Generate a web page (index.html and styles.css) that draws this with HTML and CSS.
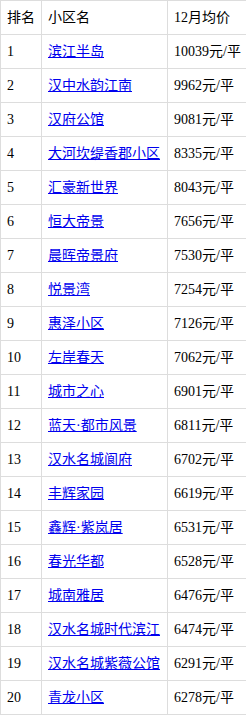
FILE: index.html
```
<!DOCTYPE html>
<html lang="zh-CN">
<head>
<meta charset="utf-8">
<title>小区均价</title>
<link rel="stylesheet" href="styles.css">
</head>
<body>
<table class="price-table">
  <thead>
    <tr><th class="c-rank">排名</th><th class="c-name">小区名</th><th class="c-price">12月均价</th></tr>
  </thead>
  <tbody>
    <tr><td>1</td><td><a href="#">滨江半岛</a></td><td>10039元/平</td></tr>
    <tr><td>2</td><td><a href="#">汉中水韵江南</a></td><td>9962元/平</td></tr>
    <tr><td>3</td><td><a href="#">汉府公馆</a></td><td>9081元/平</td></tr>
    <tr><td>4</td><td><a href="#">大河坎缇香郡小区</a></td><td>8335元/平</td></tr>
    <tr><td>5</td><td><a href="#">汇豪新世界</a></td><td>8043元/平</td></tr>
    <tr><td>6</td><td><a href="#">恒大帝景</a></td><td>7656元/平</td></tr>
    <tr><td>7</td><td><a href="#">晨晖帝景府</a></td><td>7530元/平</td></tr>
    <tr><td>8</td><td><a href="#">悦景湾</a></td><td>7254元/平</td></tr>
    <tr><td>9</td><td><a href="#">惠泽小区</a></td><td>7126元/平</td></tr>
    <tr><td>10</td><td><a href="#">左岸春天</a></td><td>7062元/平</td></tr>
    <tr><td>11</td><td><a href="#">城市之心</a></td><td>6901元/平</td></tr>
    <tr><td>12</td><td><a href="#">蓝天·都市风景</a></td><td>6811元/平</td></tr>
    <tr><td>13</td><td><a href="#">汉水名城阆府</a></td><td>6702元/平</td></tr>
    <tr><td>14</td><td><a href="#">丰辉家园</a></td><td>6619元/平</td></tr>
    <tr><td>15</td><td><a href="#">鑫辉·紫岚居</a></td><td>6531元/平</td></tr>
    <tr><td>16</td><td><a href="#">春光华都</a></td><td>6528元/平</td></tr>
    <tr><td>17</td><td><a href="#">城南雅居</a></td><td>6476元/平</td></tr>
    <tr><td>18</td><td><a href="#">汉水名城时代滨江</a></td><td>6474元/平</td></tr>
    <tr><td>19</td><td><a href="#">汉水名城紫薇公馆</a></td><td>6291元/平</td></tr>
    <tr><td>20</td><td><a href="#">青龙小区</a></td><td>6278元/平</td></tr>
  </tbody>
</table>
</body>
</html>
```
FILE: styles.css
```
html, body {
  margin: 0;
  padding: 0;
  background: #ffffff;
}
body {
  font-family: "Liberation Serif", "Noto Sans CJK SC", serif;
  font-size: 14px;
  color: #000000;
}
.price-table {
  border-collapse: collapse;
  table-layout: fixed;
  width: 246px;
}
.price-table th,
.price-table td {
  border: 1px solid #dddddd;
  padding: 6px 6px;
  line-height: 21px;
  text-align: left;
  font-weight: normal;
  white-space: nowrap;
  vertical-align: middle;
}
.c-rank { width: 28px; }
.c-name { width: 113px; }
.c-price { width: 66px; }
.price-table a {
  color: #0000ee;
  text-decoration: underline;
}
```
